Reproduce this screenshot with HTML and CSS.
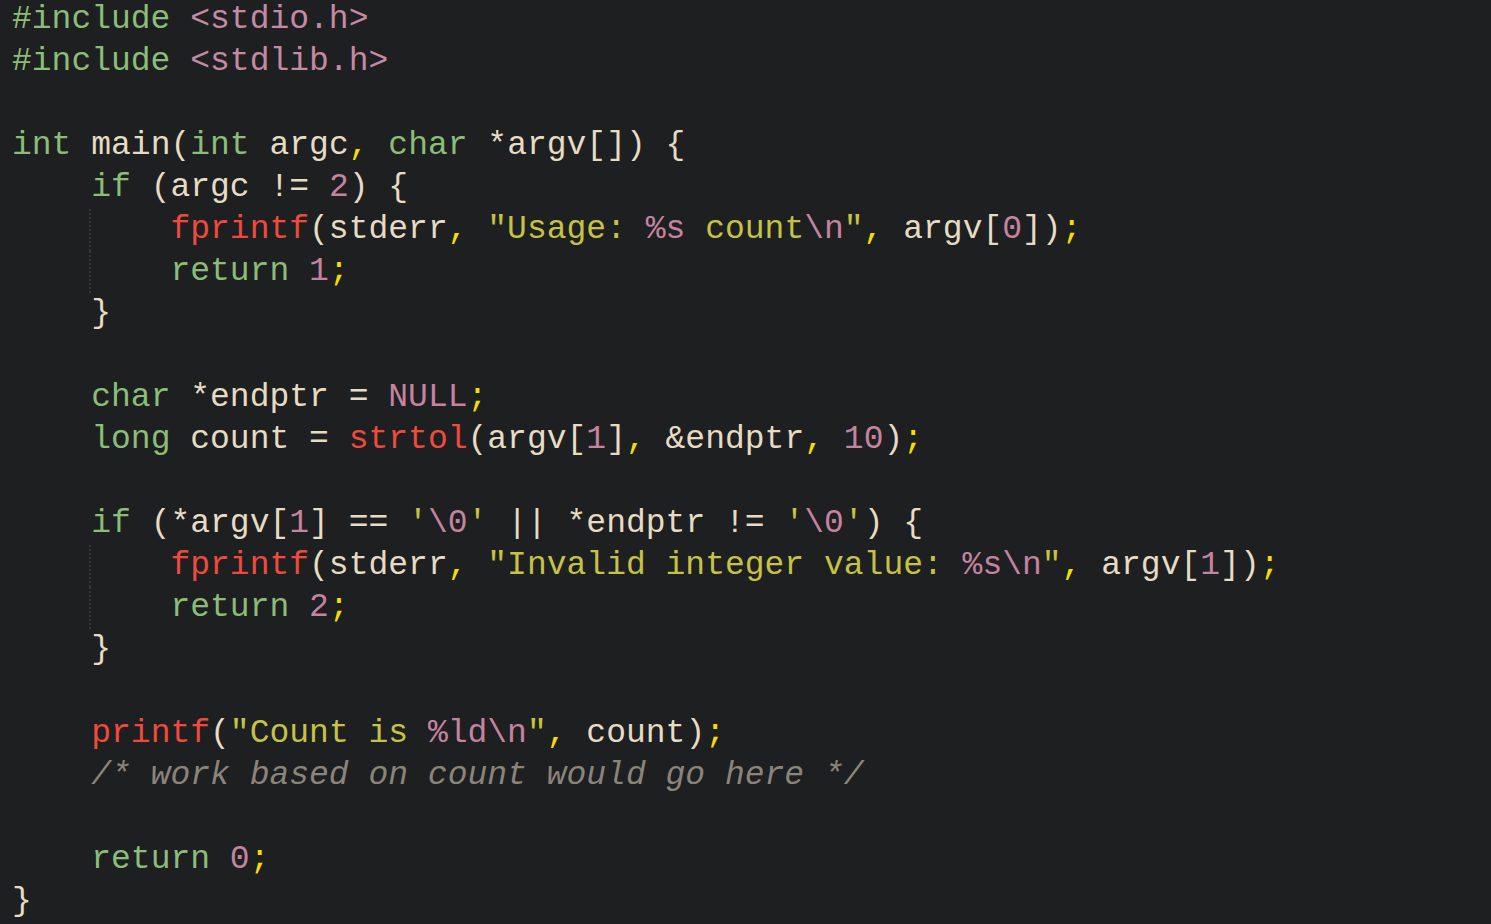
FILE: index.html
```html
<!DOCTYPE html>
<html>
<head>
<meta charset="utf-8">
<link rel="stylesheet" href="styles.css">
</head>
<body>
<div class="editor">
<div class="line"><span class="pp">#include</span> <span class="hdr">&lt;stdio.h&gt;</span></div>
<div class="line"><span class="pp">#include</span> <span class="hdr">&lt;stdlib.h&gt;</span></div>
<div class="line"> </div>
<div class="line"><span class="kw">int</span> main(<span class="kw">int</span> argc<span class="pu">,</span> <span class="kw">char</span> *argv[]) {</div>
<div class="line">    <span class="kw">if</span> (argc != <span class="num">2</span>) {</div>
<div class="line guide">        <span class="fn">fprintf</span>(stderr<span class="pu">,</span> <span class="str">"Usage: <span class="esc">%s</span> count<span class="esc">\n</span>"</span><span class="pu">,</span> argv[<span class="num">0</span>])<span class="pu">;</span></div>
<div class="line guide">        <span class="kw">return</span> <span class="num">1</span><span class="pu">;</span></div>
<div class="line">    }</div>
<div class="line"> </div>
<div class="line">    <span class="kw">char</span> *endptr = <span class="num">NULL</span><span class="pu">;</span></div>
<div class="line">    <span class="kw">long</span> count = <span class="fn">strtol</span>(argv[<span class="num">1</span>]<span class="pu">,</span> &amp;endptr<span class="pu">,</span> <span class="num">10</span>)<span class="pu">;</span></div>
<div class="line"> </div>
<div class="line">    <span class="kw">if</span> (*argv[<span class="num">1</span>] == <span class="str">'<span class="esc">\0</span>'</span> || *endptr != <span class="str">'<span class="esc">\0</span>'</span>) {</div>
<div class="line guide">        <span class="fn">fprintf</span>(stderr<span class="pu">,</span> <span class="str">"Invalid integer value: <span class="esc">%s\n</span>"</span><span class="pu">,</span> argv[<span class="num">1</span>])<span class="pu">;</span></div>
<div class="line guide">        <span class="kw">return</span> <span class="num">2</span><span class="pu">;</span></div>
<div class="line">    }</div>
<div class="line"> </div>
<div class="line">    <span class="fn">printf</span>(<span class="str">"Count is <span class="esc">%ld\n</span>"</span><span class="pu">,</span> count)<span class="pu">;</span></div>
<div class="line">    <span class="cm">/* work based on count would go here */</span></div>
<div class="line"> </div>
<div class="line">    <span class="kw">return</span> <span class="num">0</span><span class="pu">;</span></div>
<div class="line">}</div>
</div>
</body>
</html>
```
FILE: styles.css
```css
html, body {
  margin: 0;
  padding: 0;
  background: #1d1f21;
  height: 100%;
  overflow: hidden;
}
.editor {
  margin-top: -1px;
  padding-left: 12px;
  font-family: "Liberation Mono", "DejaVu Sans Mono", monospace;
  font-size: 33px;
  line-height: 42px;
  color: #e6dbc3;
}
.line {
  white-space: pre;
  height: 42px;
  position: relative;
}
.line.guide::before {
  content: "";
  position: absolute;
  left: 77px;
  top: 0;
  bottom: 0;
  border-left: 2px dotted #34373a;
}
.pp, .kw { color: #8cbd78; }
.hdr { color: #c48aa3; }
.num, .esc { color: #c4849f; }
.str { color: #c5c245; }
.fn { color: #f04a3e; }
.pu { color: #f4de00; }
.cm { color: #8a847a; font-style: italic; }
```
